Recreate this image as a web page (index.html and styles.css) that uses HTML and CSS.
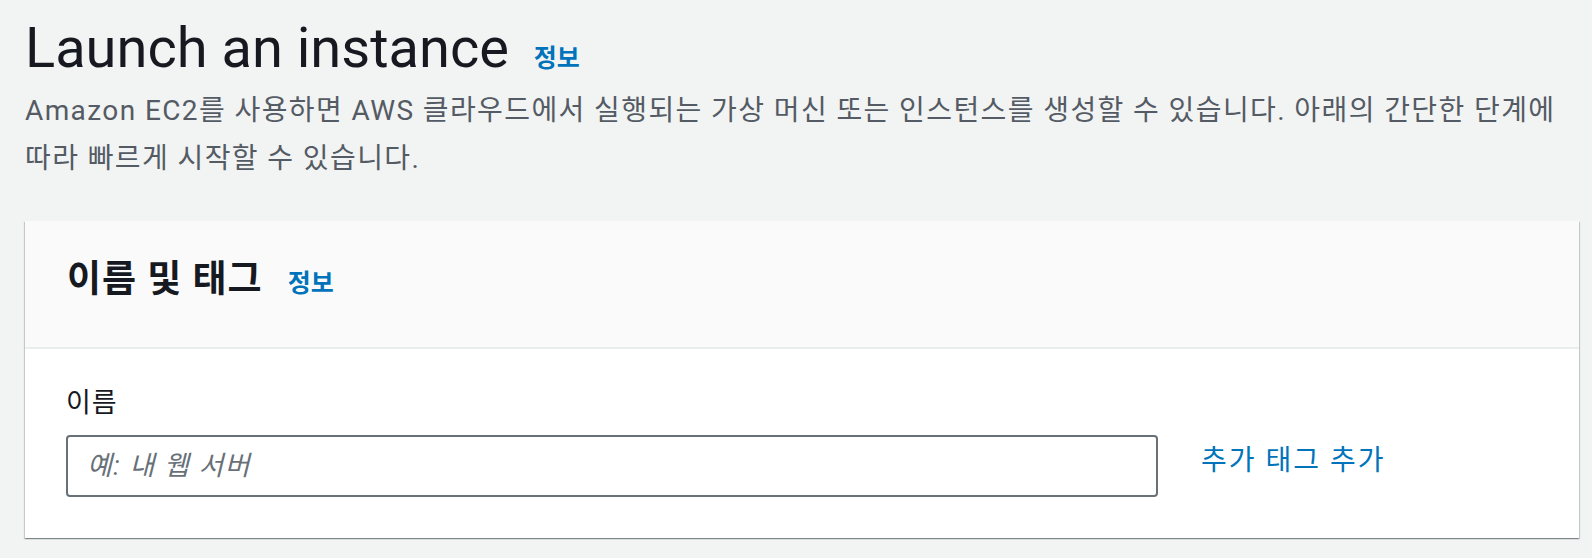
FILE: index.html
```html
<!DOCTYPE html>
<html lang="ko">
<head>
<meta charset="utf-8">
<title>Launch an instance</title>
<link rel="stylesheet" href="styles.css">
</head>
<body>
<div class="page">
  <header class="page-header">
    <h1 class="title">Launch an instance <a class="info" href="#">정보</a></h1>
    <p class="desc">Amazon EC2를 사용하면 AWS 클라우드에서 실행되는 가상 머신 또는 인스턴스를 생성할 수 있습니다. 아래의 간단한 단계에 따라 빠르게 시작할 수 있습니다.</p>
  </header>
  <section class="card">
    <div class="card-header">
      <h2 class="card-title">이름 및 태그 <a class="info info-sm" href="#">정보</a></h2>
    </div>
    <div class="card-body">
      <label class="label" for="name">이름</label>
      <div class="row">
        <input id="name" class="text-input" type="text" placeholder="예: 내 웹 서버">
        <a class="link" href="#">추가 태그 추가</a>
      </div>
    </div>
  </section>
</div>
</body>
</html>
```
FILE: styles.css
```css
* { box-sizing: border-box; }
html, body { margin: 0; padding: 0; }
body {
  background: #f2f3f3;
  font-family: Roboto, "Noto Sans CJK KR", sans-serif;
  color: #16191f;
  width: 1592px;
  height: 558px;
  overflow: hidden;
}
.page {
  padding: 0 13px 0 25px;
}
.page-header {
  padding-top: 16px;
}
.title {
  margin: 0;
  font-size: 56px;
  line-height: 64px;
  font-weight: 400;
  color: #16191f;
}
.info {
  color: #0073bb;
  font-weight: 700;
  font-size: 25px;
  line-height: 1;
  text-decoration: none;
  margin-left: 11px;
}
.info-sm {
  margin-left: 15px;
  letter-spacing: 0;
}
.desc {
  margin: 7px 0 0 0;
  font-size: 28px;
  line-height: 48px;
  letter-spacing: 1.4px;
  color: #545b64;
}
.card {
  margin-top: 38px;
  background: #ffffff;
  box-shadow: 0 1px 1px 0 rgba(0, 28, 36, 0.3), 1px 1px 1px 0 rgba(0, 28, 36, 0.15), -1px 1px 1px 0 rgba(0, 28, 36, 0.15);
}
.card-header {
  background: #fafafa;
  border-bottom: 2px solid #eaeded;
  height: 128px;
  padding: 37px 42px 0 42px;
}
.card-title {
  margin: 0;
  font-size: 37px;
  line-height: 44px;
  font-weight: 700;
  letter-spacing: 1px;
}
.card-body {
  padding: 32px 42px 41px 41px;
}
.label {
  display: block;
  font-size: 27px;
  line-height: 44px;
  letter-spacing: 1px;
  color: #16191f;
  margin-bottom: 10px;
}
.row {
  display: flex;
  align-items: flex-start;
  gap: 43px;
}
.text-input {
  width: 1092px;
  height: 62px;
  border: 2px solid #687078;
  border-radius: 4px;
  padding: 0 19px;
  font-family: Roboto, "Noto Sans CJK KR", sans-serif;
  font-size: 27px;
  letter-spacing: 1.5px;
  color: #16191f;
  background: #fff;
  outline: none;
}
.text-input::placeholder {
  color: #687078;
  font-style: italic;
  opacity: 1;
}
.link {
  color: #0073bb;
  font-size: 28px;
  line-height: 44px;
  letter-spacing: 2px;
  margin-top: 4px;
  text-decoration: none;
}
```
